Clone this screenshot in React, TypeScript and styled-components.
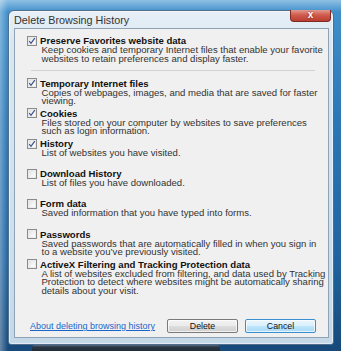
import React from 'react';
import styled, { createGlobalStyle } from 'styled-components';

const GlobalStyle = createGlobalStyle`
  html, body {
    margin: 0;
    padding: 0;
    width: 341px;
    height: 351px;
    overflow: hidden;
  }
`;

const Desktop = styled.div`
  width: 341px;
  height: 351px;
  box-sizing: border-box;
  padding: 10px 0 0 8px;
  font-family: 'Liberation Sans', Arial, sans-serif;
  background:
    linear-gradient(90deg, rgba(255,255,255,0.35) 0px, rgba(255,255,255,0) 8px),
    linear-gradient(180deg, #8fc0e4 0px, #3f8fcb 12px, #2a78b6 120px, #1f64a0 260px, #17497a 351px);
`;

const Frame = styled.div`
  width: 326px;
  height: 335px;
  box-sizing: border-box;
  display: flex;
  flex-direction: column;
  border: 1px solid #4f6f8c;
  border-radius: 6px 6px 3px 3px;
  background: linear-gradient(180deg, #e8f0f7 0px, #dae7f2 30px, #d0e1ee 200px, #c4d8e8 335px);
  box-shadow: 0 0 0 1px rgba(255,255,255,0.5) inset;
  padding: 0 4px 6px 5px;
`;

const TitleBar = styled.div`
  height: 17px;
  display: flex;
  align-items: flex-start;
  justify-content: space-between;
`;

const Title = styled.div`
  padding: 3.5px 0 0 0;
  font-size: 10.8px;
  line-height: 11px;
  color: #333;
`;

const CloseButton = styled.div`
  width: 41px;
  height: 12px;
  margin-top: -1px;
  margin-right: -2px;
  box-sizing: border-box;
  border: 1px solid #7e2a22;
  border-top: none;
  border-radius: 0 0 4px 4px;
  background: linear-gradient(180deg, #e39a90 0px, #cf5b4d 5px, #b8392c 12px);
  color: #fff;
  font-size: 10px;
  font-weight: bold;
  line-height: 10px;
  text-align: center;
  text-shadow: 0 0 2px #6a1a12;
`;

const Client = styled.div`
  flex: 1;
  display: flex;
  flex-direction: column;
  background: #f0f0f0;
  border: 1px solid #8ea3b6;
  padding: 6px 12px 4px 12px;
`;

const Item = styled.div<{ $tall?: boolean }>`
  display: grid;
  grid-template-columns: 10px 1fr;
  column-gap: 3px;
  height: ${(p) => (p.$tall ? 'auto' : '30.2px')};
`;

const Box = styled.div`
  width: 10px;
  height: 10px;
  margin-top: 0.5px;
  box-sizing: border-box;
  border: 1px solid #8b8b8b;
  background: linear-gradient(135deg, #dcdcdc 0%, #f6f6f6 60%, #ffffff 100%);
  box-shadow: inset 0 0 0 1px #e9e9e9;
  display: flex;
  align-items: center;
  justify-content: center;
`;

const Label = styled.div`
  font-size: 9.6px;
  font-weight: bold;
  line-height: 11px;
  color: #111;
  white-space: nowrap;
`;

const Desc = styled.div`
  padding-left: 1.5px;
  font-size: 9.55px;
  line-height: 8.6px;
  color: #333;
  white-space: nowrap;
`;

const Separator = styled.div`
  height: 1px;
  background: #d2d2d2;
  margin: 7px 1px 6.5px 4px;
`;

const Footer = styled.div`
  margin-top: auto;
  display: flex;
  align-items: center;
  padding-left: 3px;
`;

const HelpLink = styled.a`
  font-size: 9px;
  color: #1a66c8;
  text-decoration: underline;
  margin-right: auto;
`;

const Button = styled.div<{ $default?: boolean }>`
  width: 71px;
  height: 14px;
  box-sizing: border-box;
  margin-left: 7px;
  border-radius: 2px;
  border: 1px solid ${(p) => (p.$default ? '#3c8fce' : '#7a7a7a')};
  background: ${(p) =>
    p.$default
      ? 'linear-gradient(180deg, #eaf6fd 0%, #d9f0fc 50%, #bee6fd 51%, #a7d9f5 100%)'
      : 'linear-gradient(180deg, #f2f2f2 0%, #ebebeb 50%, #dddddd 51%, #cfcfcf 100%)'};
  box-shadow: inset 0 0 0 1px rgba(255,255,255,0.7);
  font-size: 8.8px;
  line-height: 12px;
  text-align: center;
  color: #111;
`;

const Taskbar = styled.div`
  width: 188px;
  height: 7px;
  margin: 0 0 0 24px;
  border-radius: 3px 3px 0 0;
  background: linear-gradient(180deg, #58708a 0px, #2a3744 2px, #1e2a36 7px);
`;

const Check = () => (
  <svg width="8" height="8" viewBox="0 0 8 8">
    <path d="M1.2 4.2 L3 6.3 L6.8 1.2" fill="none" stroke="#3c4f8c" strokeWidth="1.2" />
  </svg>
);

type Entry = { label: string; lines: string[]; checked: boolean; tall?: boolean };

const entries: Entry[] = [
  {
    label: 'Temporary Internet files',
    lines: ['Copies of webpages, images, and media that are saved for faster', 'viewing.'],
    checked: true,
  },
  {
    label: 'Cookies',
    lines: ['Files stored on your computer by websites to save preferences', 'such as login information.'],
    checked: true,
  },
  { label: 'History', lines: ['List of websites you have visited.'], checked: true },
  { label: 'Download History', lines: ['List of files you have downloaded.'], checked: false },
  { label: 'Form data', lines: ['Saved information that you have typed into forms.'], checked: false },
  {
    label: 'Passwords',
    lines: ['Saved passwords that are automatically filled in when you sign in', 'to a website you\u2019ve previously visited.'],
    checked: false,
  },
  {
    label: 'ActiveX Filtering and Tracking Protection data',
    lines: [
      'A list of websites excluded from filtering, and data used by Tracking',
      'Protection to detect where websites might be automatically sharing',
      'details about your visit.',
    ],
    checked: false,
    tall: true,
  },
];

const Option: React.FC<{ e: Entry }> = ({ e }) => (
  <Item $tall={e.tall}>
    <Box>{e.checked && <Check />}</Box>
    <div>
      <Label>{e.label}</Label>
      <Desc>
        {e.lines.map((l) => (
          <div key={l}>{l}</div>
        ))}
      </Desc>
    </div>
  </Item>
);

const App: React.FC = () => (
  <>
    <GlobalStyle />
    <Desktop>
      <Frame>
        <TitleBar>
          <Title>Delete Browsing History</Title>
          <CloseButton>x</CloseButton>
        </TitleBar>
        <Client>
          <Option
            e={{
              label: 'Preserve Favorites website data',
              lines: [
                'Keep cookies and temporary Internet files that enable your favorite',
                'websites to retain preferences and display faster.',
              ],
              checked: true,
              tall: true,
            }}
          />
          <Separator />
          {entries.map((e) => (
            <Option key={e.label} e={e} />
          ))}
          <Footer>
            <HelpLink>About deleting browsing history</HelpLink>
            <Button>Delete</Button>
            <Button $default>Cancel</Button>
          </Footer>
        </Client>
      </Frame>
      <Taskbar />
    </Desktop>
  </>
);

export default App;
